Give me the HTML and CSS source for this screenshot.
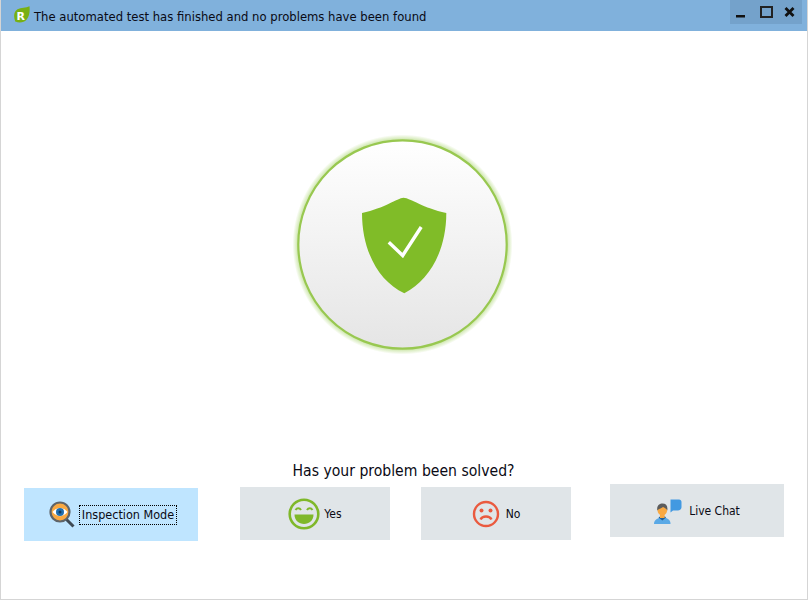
FILE: index.html
```html
<!DOCTYPE html>
<html lang="en">
<head>
<meta charset="utf-8">
<title>Automated test result</title>
<link rel="stylesheet" href="styles.css">
</head>
<body>
<div class="window">
  <header class="titlebar">
    <svg class="logo" width="18" height="18" viewBox="0 0 18 18">
      <path d="M1.200 15.500C-0.800 10 0 5.500 3.500 3.200 7 1.200 12 2 15.500 0.200 16 5 15.500 10.500 12.500 13.800 10 16.500 5.500 17.300 1.200 15.500Z" fill="#78b012"/>
      <text x="6.800" y="14" class="logo-letter">R</text>
    </svg>
    <h1 class="title">The automated test has finished and no problems have been found</h1>
    <div class="controls">
      <svg width="72" height="24" viewBox="730 0 72 24">
        <rect x="736" y="15" width="9" height="2.500" fill="#111"/>
        <rect x="761" y="7" width="11" height="10" fill="none" stroke="#222" stroke-width="2"/>
        <path d="M785.500 8L793.500 16M793.500 8L785.500 16" stroke="#111" stroke-width="2.800" fill="none"/>
      </svg>
    </div>
  </header>
  <main class="content">
    <svg class="badge" width="235" height="235" viewBox="285 125 235 235">
      <defs>
        <linearGradient id="face" x1="0" y1="0" x2="0" y2="1">
          <stop offset="0" stop-color="#ffffff"/>
          <stop offset="1" stop-color="#e5e5e5"/>
        </linearGradient>
        <radialGradient id="halo" gradientUnits="userSpaceOnUse" cx="402.500" cy="244.500" r="110">
          <stop offset="0.93" stop-color="#8cc63f" stop-opacity="0.65"/>
          <stop offset="1" stop-color="#8cc63f" stop-opacity="0"/>
        </radialGradient>
      </defs>
      <circle cx="402.500" cy="244.500" r="110" fill="url(#halo)"/>
      <circle cx="402.500" cy="244.500" r="104.200" fill="url(#face)" stroke="#98c850" stroke-width="2.200"/>
      <path d="M403.500 197.700C397 198.200 385 208 362 213 362 250 378 281 404.300 293.300 430 280 446.300 250 446.300 213 423 208 411 198.200 403.500 197.700Z" fill="#80bc28"/>
      <path d="M388.800 242.300L402.700 255.500 421.200 227" fill="none" stroke="#fff" stroke-width="3.400"/>
    </svg>
    <p class="question">Has your problem been solved?</p>
    <div class="actions">
      <button class="action action-inspect" type="button">
        <svg width="30" height="30" viewBox="-2 0 30 30">
          <path d="M19 19L26.500 26.500" stroke="#3f4a54" stroke-width="3"/>
          <circle cx="13" cy="12" r="9.500" fill="#f9a942" stroke="#5f6468" stroke-width="2.200"/>
          <path d="M5.500 12C10 6.500 16 6.500 20.500 12 16 17.500 10 17.500 5.500 12Z" fill="#fff"/>
          <circle cx="13" cy="12" r="4" fill="#1f6fb0"/>
          <circle cx="13" cy="12" r="1.500" fill="#12395c"/>
        </svg>
        <span class="focus-label">Inspection Mode</span>
      </button>
      <button class="action action-yes" type="button">
        <svg width="32" height="32" viewBox="0 0 32 32">
          <circle cx="16" cy="16" r="14.300" fill="none" stroke="#7fb82a" stroke-width="2.600"/>
          <path d="M7.500 12C9 9.500 11.500 9.500 13 12M19 12C20.500 9.500 23 9.500 24.500 12" fill="none" stroke="#7fb82a" stroke-width="2"/>
          <path d="M6.500 16.500H25.500C25.500 22.500 21 26 16 26S6.500 22.500 6.500 16.500Z" fill="#7fb82a"/>
        </svg>
        <span>Yes</span>
      </button>
      <button class="action action-no" type="button">
        <svg width="28" height="28" viewBox="0 0 28 28">
          <circle cx="14" cy="14" r="12" fill="none" stroke="#ea5a3f" stroke-width="2.400"/>
          <circle cx="9.500" cy="10.500" r="2" fill="#ea5a3f"/>
          <circle cx="18.500" cy="10.500" r="2" fill="#ea5a3f"/>
          <path d="M8.500 19.500C10.500 15.500 17.500 15.500 19.500 19.500" fill="none" stroke="#ea5a3f" stroke-width="2.400"/>
        </svg>
        <span>No</span>
      </button>
      <button class="action action-chat" type="button">
        <svg width="28" height="26" viewBox="0 0 28 26">
          <path d="M0 26C0 22 3 20.500 6 19.500H11C14 20.500 16.500 22 16.500 26Z" fill="#5aa9e6"/>
          <path d="M4.500 19.500L8.300 22.500 12 19.500 11 18.500H6Z" fill="#1f5f99"/>
          <rect x="6" y="15" width="4.600" height="5" fill="#f9a942"/>
          <circle cx="8.300" cy="12.500" r="4.800" fill="#f9a942"/>
          <path d="M3.300 12.500C2.500 7.500 5.500 5.500 8.500 5.500 12 5.500 14 8 13.300 12.500 12.500 10.500 10.500 9.800 9 9 7.500 10.500 5 10.500 3.300 12.500Z" fill="#5c5c5c"/>
          <path d="M16.500 1.500H25C26.500 1.500 27.500 2.500 27.500 4V9C27.500 11 26 12.500 24 12.500H19L16.500 14.500Z" fill="#4299e1"/>
        </svg>
        <span>Live Chat</span>
      </button>
    </div>
  </main>
</div>
</body>
</html>
```

FILE: styles.css
```css
* {
  box-sizing: border-box;
}

html,
body {
  margin: 0;
  height: 100%;
  background: #fff;
}

.window {
  width: 808px;
  height: 600px;
  display: flex;
  flex-direction: column;
  border: 1px solid #d5d5d5;
  border-top: 0;
  font-family: "DejaVu Sans", Verdana, sans-serif;
  font-stretch: condensed;
  color: #0a0a14;
  overflow: hidden;
}

.titlebar {
  flex: none;
  height: 31px;
  margin: 0 -1px;
  display: flex;
  align-items: flex-start;
  background: #80b1dc;
  padding-left: 14px;
}

.logo {
  flex: none;
  margin-top: 6px;
}

.logo-letter {
  font: bold 11px "DejaVu Sans", sans-serif;
  fill: #fff;
  text-anchor: middle;
}

.title {
  margin: 8px 0 0 2px;
  font-size: 12.930px;
  line-height: 17px;
  font-weight: 400;
  white-space: nowrap;
}

.controls {
  margin-left: auto;
  margin-right: 6px;
  width: 72px;
  height: 24px;
  background: #74a2cb;
}

.controls svg {
  display: block;
}

.content {
  flex: 1;
  display: flex;
  flex-direction: column;
  align-items: flex-start;
  padding-top: 94px;
}

.badge {
  display: block;
  margin-left: 284px;
}

.question {
  margin: 102px 0 0;
  width: 100%;
  padding-right: 1px;
  text-align: center;
  font-size: 15.600px;
  line-height: 18px;
}

.actions {
  display: flex;
  align-items: flex-start;
  padding-left: 23px;
}

.action {
  height: 53px;
  display: flex;
  align-items: center;
  justify-content: center;
  border: 0;
  padding: 0;
  background: #e0e5e8;
  color: inherit;
  font-family: inherit;
  font-stretch: inherit;
  font-size: 12px;
}

.action-inspect {
  width: 174px;
  margin-top: 8px;
  gap: 4px;
  background: #bfe5ff;
  font-size: 12.500px;
}

.action-yes {
  width: 150px;
  margin: 7px 0 0 42px;
  gap: 4px;
}

.action-no {
  width: 150px;
  margin: 7px 0 0 31px;
  gap: 6px;
}

.action-chat {
  width: 174px;
  margin: 4px 0 0 39px;
  gap: 7px;
}

.focus-label {
  border: 1px dotted #000;
  padding: 2px;
  line-height: 14px;
}
```
